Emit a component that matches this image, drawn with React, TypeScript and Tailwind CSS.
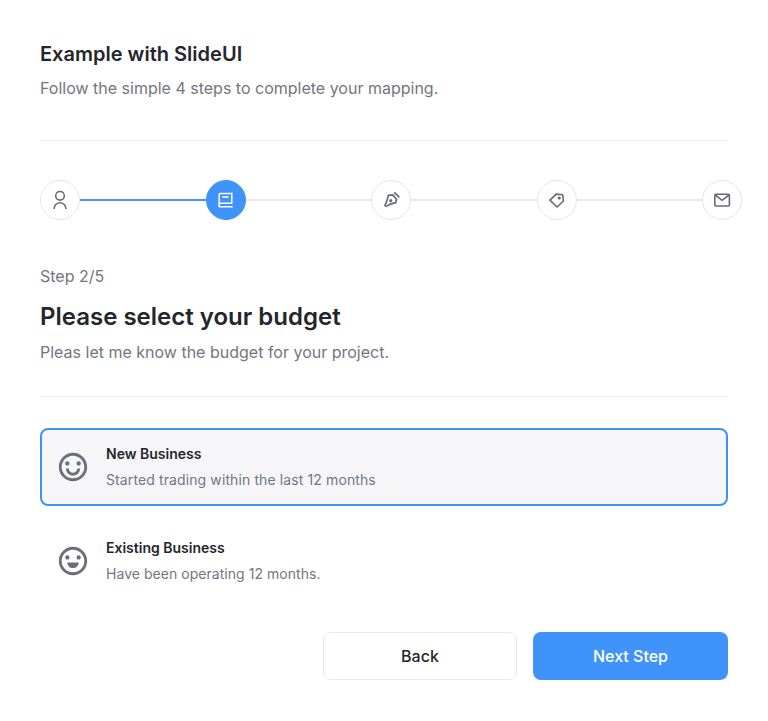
import { Fragment, ReactNode } from "react";
import { RiEmotionLine, RiEmotionHappyLine } from "react-icons/ri";

function Glyph({ children }: { children: ReactNode }) {
  return (
    <svg className="size-[38px]" viewBox="1 1 38 38" fill="none" stroke="currentColor" strokeWidth="1.6">
      {children}
    </svg>
  );
}

const steps: ReactNode[] = [
  <Glyph>
    <circle cx="20" cy="15.8" r="4.3" />
    <path d="M14.1 29v-.3a5.9 5.9 0 0 1 11.8 0v.3" />
  </Glyph>,
  <Glyph>
    <path d="M25.8 23.2H14.6a1.7 1.7 0 0 0 0 3.6h12M13.2 25V14.5a1.1 1.1 0 0 1 1.1-1.1h11.5v10.4M16.2 17h6.4" strokeWidth="1.5" />
  </Glyph>,
  <Glyph>
    <path d="M13.4 26.2c1.9-2.9 2.9-6.2 4-10.8l4.4-.5 3.8 4.6-.9 3.2c-4.2.8-7 1.9-9.9 3.9M23.2 12.4l5.2 4.9" strokeWidth="1.7" />
    <circle cx="19.8" cy="20.7" r="1.6" fill="currentColor" stroke="none" />
  </Glyph>,
  <Glyph>
    <path d="M12.9 20.2l6.4-6.1 6.4.6.7 6.3-6.3 6z" strokeLinejoin="round" />
    <circle cx="22.2" cy="18" r="1.6" fill="currentColor" stroke="none" />
  </Glyph>,
  <Glyph>
    <rect x="12.8" y="14.2" width="14.6" height="11.8" rx="1" />
    <path d="M13.2 15l6.9 5.3 6.9-5.3" />
  </Glyph>,
];

const options = [
  {
    Icon: RiEmotionHappyLine,
    title: "New Business",
    text: "Started trading within the last 12 months",
    tracking: "tracking-[0.11px]",
    selected: true,
  },
  {
    Icon: RiEmotionLine,
    title: "Existing Business",
    text: "Have been operating 12 months.",
    tracking: "tracking-[0.04px]",
    selected: false,
  },
];

function Stepper({ current }: { current: number }) {
  return (
    <div className="mt-[39px] flex h-10 w-[702px] items-center">
      {steps.map((icon, i) => (
        <Fragment key={i}>
          {i > 0 && <div className={`h-0.5 flex-1 ${i <= current ? "bg-[#4b98ea]" : "bg-[#e9e9eb]"}`} />}
          <div
            className={`flex size-10 shrink-0 items-center justify-center rounded-full border ${
              i === current ? "border-[#4093f8] bg-[#4093f8] text-white" : "border-[#e6e6e8] bg-white text-[#696b76]"
            }`}
          >
            {icon}
          </div>
        </Fragment>
      ))}
    </div>
  );
}

export default function App() {
  return (
    <main className="h-[721px] w-[768px] overflow-hidden bg-white px-10 pt-10 [font-family:Inter,sans-serif] text-[#23262b]">
      <header className="h-[101px] border-b border-[#ebebed]">
        <h1 className="text-xl leading-[29px] font-semibold tracking-[0.01px]">Example with SlideUI</h1>
        <p className="mt-[7px] text-base leading-6 text-[#74767e]">Follow the simple 4 steps to complete your mapping.</p>
      </header>
      <Stepper current={1} />
      <section className="mt-11 h-[133px] border-b border-[#ebebed]">
        <p className="text-base leading-6 text-[#74767e]">Step 2/5</p>
        <h2 className="mt-[13px] text-2xl leading-8 font-semibold">Please select your budget</h2>
        <p className="mt-[7px] text-base leading-6 text-[#74767e]">Pleas let me know the budget for your project.</p>
      </section>
      <div className="mt-[31px] flex flex-col gap-4">
        {options.map(({ Icon, title, text, tracking, selected }) => (
          <button
            key={title}
            className={`flex h-[78px] items-center gap-4 rounded-lg border-2 pl-[14px] text-left ${
              selected ? "border-[#4093e8] bg-[#f6f6f9]" : "border-transparent"
            }`}
          >
            <Icon size={34} className="text-[#6c6e79]" />
            <span>
              <span className="block text-sm leading-5 font-semibold">{title}</span>
              <span className={`mt-1.5 block text-sm leading-5 text-[#74767e] ${tracking}`}>{text}</span>
            </span>
          </button>
        ))}
      </div>
      <footer className="mt-8 flex justify-end gap-4 text-base font-medium">
        <button className="h-12 w-[194px] rounded-lg border border-[#e6e6e8] bg-white">Back</button>
        <button className="h-12 w-[195px] rounded-lg bg-[#4093f8] text-white">Next Step</button>
      </footer>
    </main>
  );
}
